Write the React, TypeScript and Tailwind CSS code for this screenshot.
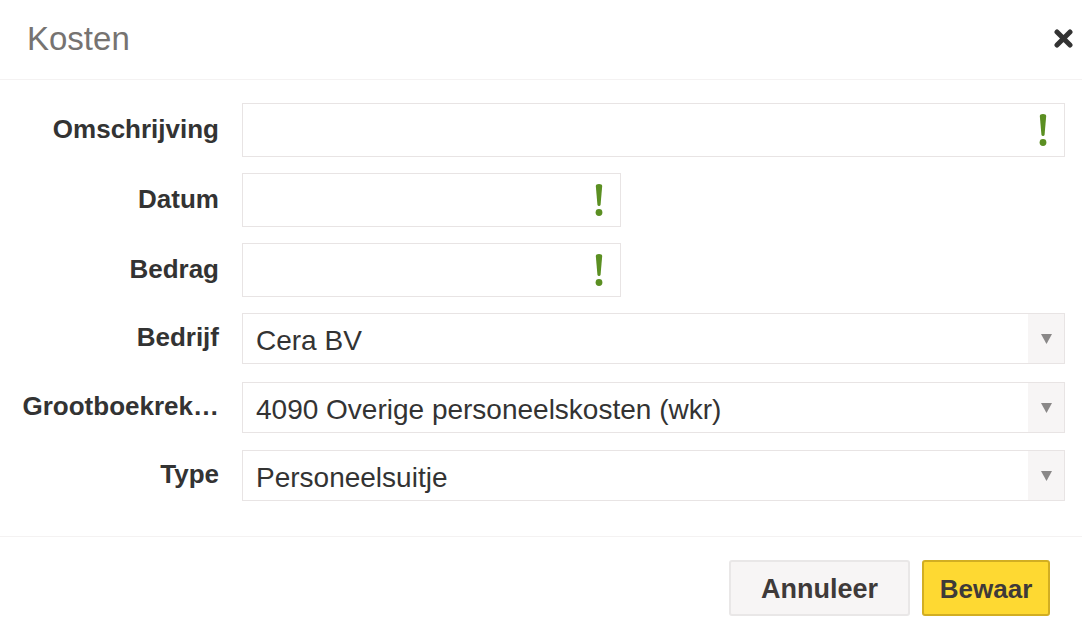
import React from "react";

const font = { fontFamily: '"Liberation Sans", Arial, sans-serif' };

const Warn = () => (
  <svg width="8" height="32" viewBox="0 0 8 32" className="shrink-0">
    <path d="M0.8 2 Q0.8 0 4 0 Q7.2 0 7.2 2 L5.6 20.5 Q5.4 22 4 22 Q2.6 22 2.4 20.5 Z" fill="#5b8f22" />
    <circle cx="4" cy="28.5" r="3.4" fill="#5b8f22" />
  </svg>
);

const Close = () => (
  <svg width="19" height="19" viewBox="0 0 19 19">
    <path d="M3 3 L16 16 M16 3 L3 16" stroke="#333" strokeWidth="5" strokeLinecap="round" />
  </svg>
);

interface IField {
  label: string;
  wide?: boolean;
  select?: string;
  top: string;
}

const fields: IField[] = [
  { label: "Omschrijving", wide: true, top: "mt-[23px]" },
  { label: "Datum", top: "mt-[16px]" },
  { label: "Bedrag", top: "mt-[16px]" },
  { label: "Bedrijf", select: "Cera BV", top: "mt-[16px]" },
  { label: "Grootboekrek…", select: "4090 Overige personeelskosten (wkr)", top: "mt-[18px]" },
  { label: "Type", select: "Personeelsuitje", top: "mt-[17px]" },
];

const Row = ({ f }: { f: IField }) => (
  <div className={`flex items-center ${f.top}`}>
    <div className="w-[220px] shrink-0 text-right text-[26px] font-bold text-[#333] leading-none pr-px pb-[3px] whitespace-nowrap">
      {f.label}
    </div>
    <div className="w-[22px] shrink-0" />
    {f.select ? (
      <div className="flex-1 h-[51px] border border-[#e8e4e4] flex items-stretch">
        <div className="flex-1 flex items-center pl-[13px] pt-[4px] text-[28px] text-[#333] leading-none">
          {f.select}
        </div>
        <div className="w-[36px] bg-[#f7f5f5] flex items-center justify-center">
          <svg width="11" height="10" viewBox="0 0 11 10">
            <path d="M0 0 H11 L5.5 10 Z" fill="#8a8888" />
          </svg>
        </div>
      </div>
    ) : (
      <div
        className={`h-[54px] border border-[#e8e4e4] flex items-center justify-end pr-[17px] ${
          f.wide ? "flex-1" : "w-[379px]"
        }`}
      >
        <Warn />
      </div>
    )}
  </div>
);

const App = () => {
  return (
    <div className="w-[1082px] h-[636px] bg-white flex flex-col" style={font}>
      {/* header */}
      <div className="h-[80px] border-b border-[#f4f2f2] flex items-center justify-between pl-[27px] pr-[9px]">
        <h1 className="text-[33px] text-[#767371] leading-none pb-[2px]">Kosten</h1>
        <div className="pb-[2px]">
          <Close />
        </div>
      </div>
      {/* body */}
      <div className="h-[457px] border-b border-[#f4f2f2] pr-[17px]">
        {fields.map((f) => (
          <Row key={f.label} f={f} />
        ))}
      </div>
      {/* footer */}
      <div className="flex justify-end gap-[12px] pt-[23px] pr-[32px]">
        <button className="w-[181px] h-[56px] rounded-[3px] border-2 border-[#e9e7e7] bg-[#f7f5f5] pt-[3px] text-[27px] font-bold text-[#3e3a39]">
          Annuleer
        </button>
        <button className="w-[128px] h-[56px] rounded-[3px] border-2 border-[#d2ae22] bg-[#fed932] pt-[3px] text-[26px] font-bold text-[#3e3a39]">
          Bewaar
        </button>
      </div>
    </div>
  );
};

export default App;
